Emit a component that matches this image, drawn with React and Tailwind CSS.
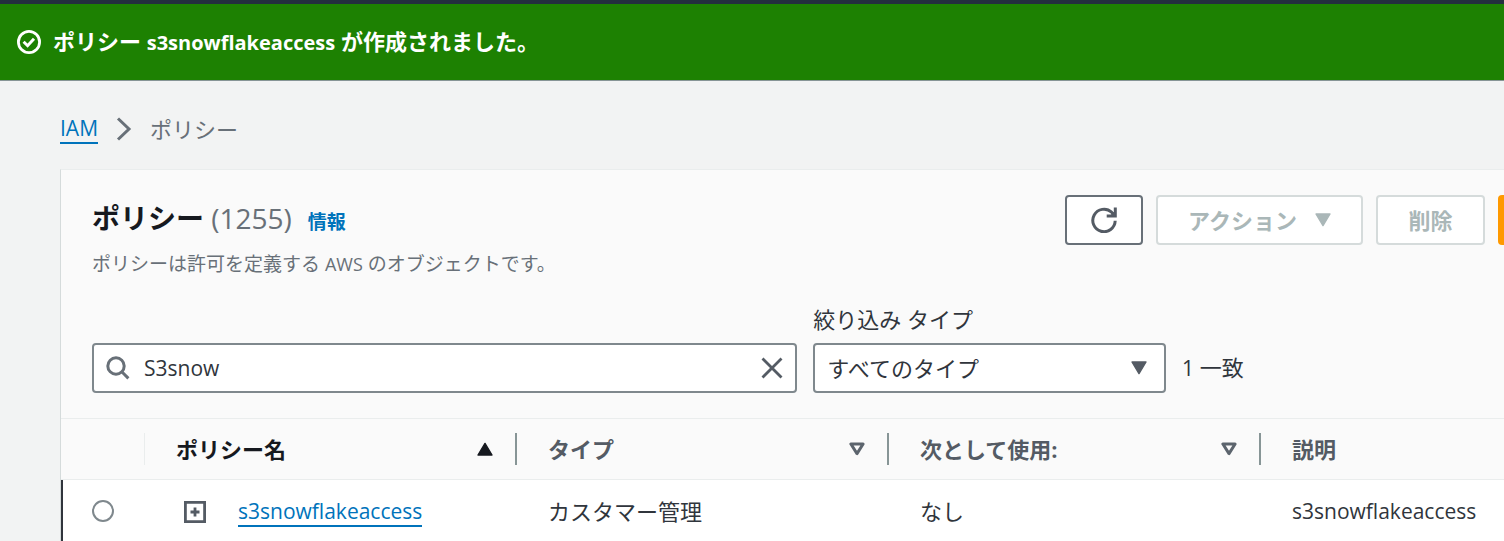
import React, { useState } from 'react';

const POLICIES = [
  { name: 's3snowflakeaccess', type: 'カスタマー管理', usedAs: 'なし', description: 's3snowflakeaccess' },
];

const COLUMNS = [
  { key: 'name', label: 'ポリシー名', sorted: true },
  { key: 'type', label: 'タイプ' },
  { key: 'usedAs', label: '次として使用:' },
];

function SuccessIcon() {
  return (
    <svg className="w-6 h-6 shrink-0" viewBox="0 0 24 24" fill="none" stroke="currentColor" aria-hidden="true">
      <circle cx="12" cy="12" r="10.6" strokeWidth="2.8" />
      <path d="M6.6 11.8l4 3.9 6.4-6.9" strokeWidth="3" />
    </svg>
  );
}

function RefreshIcon() {
  return (
    <svg className="w-[26px] h-[26px]" viewBox="0 0 26 26" fill="none" stroke="currentColor" strokeWidth="3" aria-hidden="true">
      <path d="M24.2 13.8a11.2 11.2 0 1 1-3.6-8.6l2.4 2.6" />
      <path d="M24.3 0.6v8.5h-8.6" />
      <path d="M24.3 4v5h-5z" fill="currentColor" strokeWidth="1" />
    </svg>
  );
}

function SearchIcon() {
  return (
    <svg className="w-6 h-6 shrink-0 text-[#687078]" viewBox="0 0 24 24" fill="none" stroke="currentColor" strokeWidth="3" aria-hidden="true">
      <circle cx="10" cy="10" r="8.2" />
      <path d="M15.8 15.8l6.6 6.6" />
    </svg>
  );
}

function Triangle({ className }) {
  return (
    <svg className={className} viewBox="0 0 16 14" aria-hidden="true">
      <path d="M1 1h14L8 12.6z" fill="currentColor" stroke="currentColor" strokeWidth="1.4" strokeLinejoin="round" />
    </svg>
  );
}

function SortIcon({ sorted }) {
  if (sorted) return <Triangle className="w-4 h-[14px] rotate-180 text-[#16191f]" />;
  return (
    <svg className="w-4 h-[14px] text-[#5c646d]" viewBox="0 0 16 14" fill="none" aria-hidden="true">
      <path d="M1.9 2h12.2L8 11.6z" stroke="currentColor" strokeWidth="3" strokeLinejoin="round" />
    </svg>
  );
}

export default function App() {
  const [query, setQuery] = useState('S3snow');
  const [selected, setSelected] = useState('');

  return (
    <div className="min-h-screen overflow-x-hidden bg-[#f2f3f3] font-['Open_Sans','Noto_Sans_CJK_JP',sans-serif] text-[22px] leading-8 text-[#30353c]">
      <div className="h-1 bg-[#232f3e]" />

      {/* Flash message */}
      <div role="status" className="flex items-center gap-3 h-[77px] px-[17px] border-b border-[#879596] bg-[#1d8102] font-bold text-white">
        <SuccessIcon />
        <p>
          ポリシー <span className="text-[20px]">s3snowflakeaccess</span> が作成されました。
        </p>
      </div>

      <div className="pl-[60px]">
        {/* Breadcrumbs */}
        <nav aria-label="breadcrumb" className="flex items-center gap-[18px] h-[88px] pt-[7px] text-[#687078]">
          <a href="#iam" className="border-b-2 border-[#0073bb] text-[21px] leading-7 text-[#0073bb]">IAM</a>
          <svg className="w-4 h-6" viewBox="0 0 16 24" fill="none" stroke="currentColor" strokeWidth="3" aria-hidden="true">
            <path d="M2 1.5l11 10.5L2 22.5" />
          </svg>
          <span>ポリシー</span>
        </nav>

        <main className="border-t border-l border-t-[#eaeded] border-l-[#d5dbdb] bg-[#fafafa]">
          <div className="flex items-start justify-between overflow-hidden pt-[25px] pl-[31px]">
            <div>
              <div className="flex items-baseline">
                <h1 className="text-[28px] leading-[46px] font-bold text-[#16191f]">
                  ポリシー <span className="font-normal text-[#687078]">(1255)</span>
                </h1>
                <a href="#info" className="ml-4 text-[19px] font-bold text-[#0073bb]">情報</a>
              </div>
              <p className="text-[19px] leading-[46px] text-[#687078]">
                ポリシーは許可を定義する <span className="text-[18px]">AWS</span> のオブジェクトです。
              </p>
            </div>
            <div className="flex gap-[13px] font-bold">
              <button type="button" aria-label="更新" className="flex items-center justify-center w-[78px] h-[50px] rounded-sm border-2 border-[#687078] bg-white text-[#545b64]">
                <RefreshIcon />
              </button>
              <button type="button" disabled className="flex items-center justify-center gap-[18px] w-[207px] h-[50px] rounded-sm border-2 border-[#d5dbdb] bg-white text-[#aab7b8]">
                アクション
                <Triangle className="w-4 h-[14px]" />
              </button>
              <button type="button" disabled className="w-[109px] h-[50px] rounded-sm border-2 border-[#d5dbdb] bg-white text-[#aab7b8]">
                削除
              </button>
              <button type="button" aria-label="ポリシーを作成" className="w-[218px] h-[50px] -mr-[212px] rounded-sm bg-[#ff9900]" />
            </div>
          </div>

          {/* Filters */}
          <div className="grid grid-cols-[2fr_1fr_322px] items-end gap-4 pt-4 pb-[25px] pl-[31px]">
            <div className="flex items-center gap-[14px] h-[50px] px-3 rounded-sm border-2 border-[#7f888d] bg-white">
              <SearchIcon />
              <input
                type="text"
                aria-label="検索"
                value={query}
                onChange={(e) => setQuery(e.target.value)}
                className="flex-1 min-w-0 text-[21px] outline-none"
              />
              <button type="button" aria-label="クリア" onClick={() => setQuery('')} className="text-[#545b64]">
                <svg className="w-[22px] h-[22px]" viewBox="0 0 22 22" fill="none" stroke="currentColor" strokeWidth="2.8" aria-hidden="true">
                  <path d="M1.5 1.5l19 19M20.5 1.5l-19 19" />
                </svg>
              </button>
            </div>
            <div className="flex flex-col gap-2">
              <label htmlFor="policy-type">絞り込み タイプ</label>
              <div className="relative">
                <select id="policy-type" className="appearance-none w-full h-[50px] px-3 rounded-sm border-2 border-[#7f888d] bg-white outline-none">
                  <option>すべてのタイプ</option>
                </select>
                <Triangle className="absolute top-[18px] right-[19px] w-4 h-[14px] pointer-events-none text-[#545b64]" />
              </div>
            </div>
            <p className="leading-[50px]">
              <span className="text-[21px]">1</span> 一致
            </p>
          </div>

          {/* Policy table */}
          <table className="w-full table-fixed border-separate border-spacing-0 text-left">
            <colgroup>
              <col className="w-[84px]" />
              <col className="w-[372px]" />
              <col className="w-[372px]" />
              <col className="w-[372px]" />
              <col />
            </colgroup>
            <thead>
              <tr className="h-[62px]">
                <td className="p-0 border-y border-[#eaeded]">
                  <div className="h-8 border-r border-[#eaeded]" />
                </td>
                {COLUMNS.map((col) => (
                  <th key={col.key} className="p-0 border-y border-[#eaeded]">
                    <button
                      type="button"
                      className={`flex items-center justify-between w-full h-8 pl-[31px] pr-[22px] border-r-2 border-[#879596] font-bold ${col.sorted ? 'text-[#16191f]' : 'text-[#545b64]'}`}
                    >
                      {col.label}
                      <SortIcon sorted={col.sorted} />
                    </button>
                  </th>
                ))}
                <th className="py-0 pl-[31px] pr-0 border-y border-[#eaeded] font-bold text-[#545b64]">説明</th>
              </tr>
            </thead>
            <tbody>
              {POLICIES.map((policy) => (
                <tr key={policy.name} className="h-[62px] bg-white">
                  <td className="p-0 pl-[29px] border-l-2 border-[#30353c]">
                    <input
                      type="radio"
                      name="policy"
                      aria-label={policy.name}
                      checked={selected === policy.name}
                      onChange={() => setSelected(policy.name)}
                      className="appearance-none block w-[22px] h-[22px] rounded-full border-2 border-[#7f888d] bg-white checked:border-[6px] checked:border-[#0073bb]"
                    />
                  </td>
                  <td className="p-0 pl-[39px]">
                    <div className="flex items-center gap-8 pt-[2px]">
                      <button type="button" aria-label="展開" className="text-[#545b64]">
                        <svg className="w-[22px] h-[22px]" viewBox="0 0 22 22" fill="none" stroke="currentColor" aria-hidden="true">
                          <path d="M1.4 1.4h19.2v19.2H1.4z" strokeWidth="2.8" />
                          <path d="M11 6.5v9M6.5 11h9" strokeWidth="2.8" />
                        </svg>
                      </button>
                      <a href="#policy" className="border-b-2 border-[#0073bb] text-[21px] leading-7 text-[#0073bb]">{policy.name}</a>
                    </div>
                  </td>
                  <td className="p-0 pl-[31px]">{policy.type}</td>
                  <td className="p-0 pl-[31px]">{policy.usedAs}</td>
                  <td className="p-0 pl-[31px] text-[21px]">{policy.description}</td>
                </tr>
              ))}
            </tbody>
          </table>
        </main>
      </div>
    </div>
  );
}
